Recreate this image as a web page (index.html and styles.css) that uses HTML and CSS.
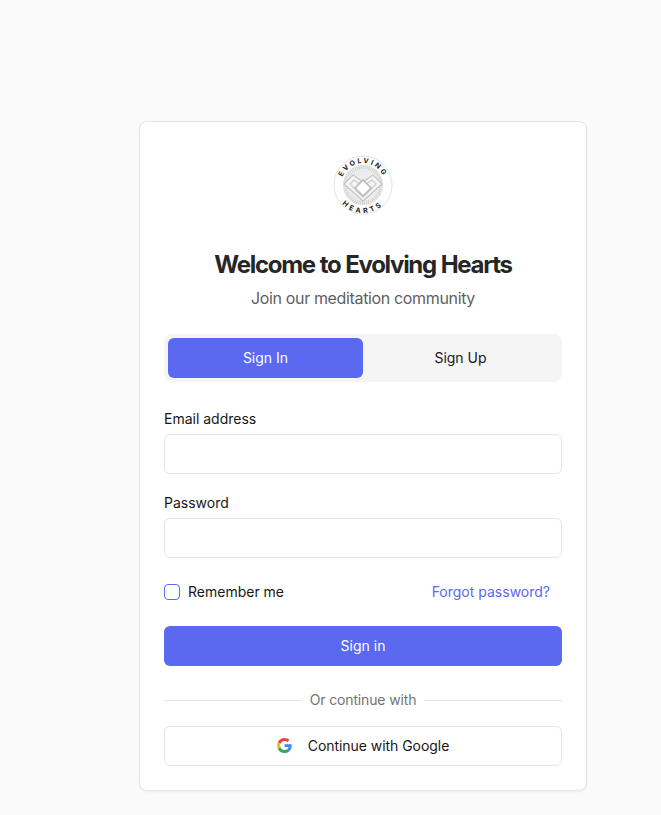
FILE: index.html
```html
<!DOCTYPE html>
<html lang="en">
<head>
    <meta charset="UTF-8">
    <meta name="viewport" content="width=device-width, initial-scale=1.0">
    <title>Welcome to Evolving Hearts</title>
    <link rel="stylesheet" href="styles.css">
</head>

<body>
    <main class="card">
        <!-- logo -->
        <svg class="logo" width="64" height="64" viewBox="0 0 64 64" fill="none">
            <defs>
                <path id="arcTop" d="M10 32a22 22 0 0 1 44 0"/>
                <path id="arcBottom" d="M4 32a28 28 0 0 0 56 0"/>
            </defs>
            <circle cx="32" cy="32" r="29" stroke="#d0d0d0" stroke-width="0.6"/>
            <circle cx="32" cy="32" r="20" fill="#ececec"/>
            <circle cx="32" cy="32" r="18" stroke="#cdcdcd" stroke-width="4" stroke-dasharray="0.8 1.2"/>
            <path d="M32 48 13 31l9-9 10 7 10-7 9 9z" fill="#f5f5f5" stroke="#c4c4c4" stroke-width="1.2"/>
            <path d="M32 44 19 31l4-4 9 6 9-6 4 4z" stroke="#d2d2d2" stroke-width="1.5"/>
            <path d="M32 27l8 8-8 8-8-8z" fill="#fff" stroke="#bcbcbc" stroke-width="1.6"/>
            <text class="logo-text"><textPath href="#arcTop" startOffset="50%" text-anchor="middle">EVOLVING</textPath></text>
            <text class="logo-text logo-text-bottom"><textPath href="#arcBottom" startOffset="50%" text-anchor="middle">HEARTS</textPath></text>
        </svg>

        <h1>Welcome to Evolving Hearts</h1>
        <p class="subtitle">Join our meditation community</p>

        <div class="tabs">
            <button type="button" class="tab tab-active">Sign In</button>
            <button type="button" class="tab">Sign Up</button>
        </div>

        <!-- form -->
        <form class="form">
            <div class="field">
                <label for="email">Email address</label>
                <input type="email" id="email" name="email">
            </div>
            <div class="field">
                <label for="password">Password</label>
                <input type="password" id="password" name="password">
            </div>

            <div class="form-row">
                <label class="remember" for="remember">
                    <input type="checkbox" id="remember" name="remember">
                    <span>Remember me</span>
                </label>
                <a class="forgot" href="#">Forgot password?</a>
            </div>

            <button type="submit" class="submit">Sign in</button>
        </form>

        <div class="divider"><span>Or continue with</span></div>

        <button type="button" class="google">
            <svg width="15" height="15" viewBox="0 0 48 48">
                <path fill="#EA4335" d="M24 9.5c3.5 0 6.700 1.200 9.200 3.600l6.900-6.900C35.900 2.400 30.500 0 24 0 14.600 0 6.500 5.400 2.600 13.200l8 6.200C12.500 13.700 17.800 9.500 24 9.500z"/>
                <path fill="#4285F4" d="M46.900 24.500c0-1.600-.1-3.100-.4-4.500H24v9h12.900c-.6 3-2.200 5.500-4.700 7.200l7.700 6c4.500-4.200 7-10.300 7-17.700z"/>
                <path fill="#FBBC05" d="M10.600 28.600c-.5-1.400-.8-3-.8-4.600s.3-3.200.8-4.600l-8-6.200C.9 16.500 0 20.100 0 24s.9 7.500 2.600 10.800l8-6.200z"/>
                <path fill="#34A853" d="M24 48c6.500 0 11.900-2.100 15.900-5.800l-7.700-6c-2.200 1.400-4.900 2.300-8.200 2.300-6.200 0-11.500-4.200-13.400-9.900l-8 6.200C6.500 42.600 14.600 48 24 48z"/>
            </svg>
            <span>Continue with Google</span>
        </button>
    </main>
</body>
</html>
```

FILE: styles.css
```css
* {
    box-sizing: border-box;
}

body {
    margin: 0;
    min-height: 815px;
    padding: 121px 0 0 139px;
    background-color: #fafafa;
    font-family: Inter, 'Liberation Sans', sans-serif;
    color: #171717;
}

.card {
    display: flex;
    flex-direction: column;
    width: 448px;
    height: 670px;
    padding: 24px;
    background-color: #fff;
    border: 1px solid #e5e5e5;
    border-radius: 8px;
    box-shadow: 0 1px 2px rgba(0, 0, 0, 0.05);
}

.logo {
    align-self: center;
    margin-top: 7px;
}

.logo-text {
    font-family: Inter, 'Liberation Sans', sans-serif;
    font-size: 7px;
    font-weight: 700;
    letter-spacing: 2.1px;
    fill: #1c1c1c;
}

.logo-text-bottom {
    letter-spacing: 3px;
}

h1 {
    margin: 32px 0 1px;
    font-size: 24px;
    line-height: 32px;
    font-weight: 700;
    letter-spacing: -1.3px;
    word-spacing: 0.5px;
    text-align: center;
    color: #262626;
}

.subtitle {
    margin: 4px 0 0;
    font-size: 16px;
    line-height: 24px;
    letter-spacing: -0.35px;
    text-align: center;
    color: #5f5f5f;
}

.tabs {
    display: flex;
    margin-top: 24px;
    padding: 4px;
    background-color: #f5f5f5;
    border-radius: 8px;
}

.tab {
    flex: 1;
    height: 40px;
    padding: 0 0 2px;
    background: none;
    border: none;
    border-radius: 6px;
    font: 400 14px Inter, 'Liberation Sans', sans-serif;
    color: #171717;
}

.tab-active {
    background-color: #5a69f0;
    color: #fff;
}

.form {
    margin-top: 27px;
}

.field {
    margin-bottom: 19px;
}

.field label {
    display: block;
    margin-bottom: 5px;
    font-size: 14px;
    line-height: 20px;
    font-weight: 400;
}

.field input {
    display: block;
    width: 100%;
    height: 40px;
    padding: 0 12px;
    background-color: #fff;
    border: 1px solid #e5e5e5;
    border-radius: 6px;
}

.form-row {
    display: flex;
    align-items: center;
    justify-content: space-between;
    height: 20px;
    margin-top: 24px;
    padding-right: 12px;
}

.remember {
    display: flex;
    align-items: center;
    gap: 8px;
    font-size: 14px;
    line-height: 20px;
}

.remember input {
    appearance: none;
    width: 16px;
    height: 16px;
    margin: 0;
    background-color: #fff;
    border: 1px solid #5a69f0;
    border-radius: 4px;
}

.forgot {
    font-size: 14px;
    line-height: 20px;
    color: #5a69f0;
    text-decoration: none;
}

.submit {
    display: block;
    width: 100%;
    height: 40px;
    margin-top: 24px;
    padding: 0 0 2px;
    background-color: #5a69f0;
    color: #fff;
    border: none;
    border-radius: 6px;
    font: 400 14px Inter, 'Liberation Sans', sans-serif;
}

.divider {
    display: flex;
    align-items: center;
    gap: 8px;
    margin-top: 24px;
    font-size: 14px;
    line-height: 20px;
    letter-spacing: -0.15px;
    color: #737373;
}

.divider::before,
.divider::after {
    content: "";
    flex: 1;
    height: 1px;
    background-color: #e5e5e5;
}

.google {
    display: flex;
    align-items: center;
    justify-content: center;
    gap: 16px;
    width: 100%;
    height: 40px;
    margin-top: 16px;
    padding: 0 0 2px;
    background-color: #fff;
    border: 1px solid #e5e5e5;
    border-radius: 6px;
    font: 400 14px Inter, 'Liberation Sans', sans-serif;
    letter-spacing: -0.05px;
    color: #171717;
}
```
